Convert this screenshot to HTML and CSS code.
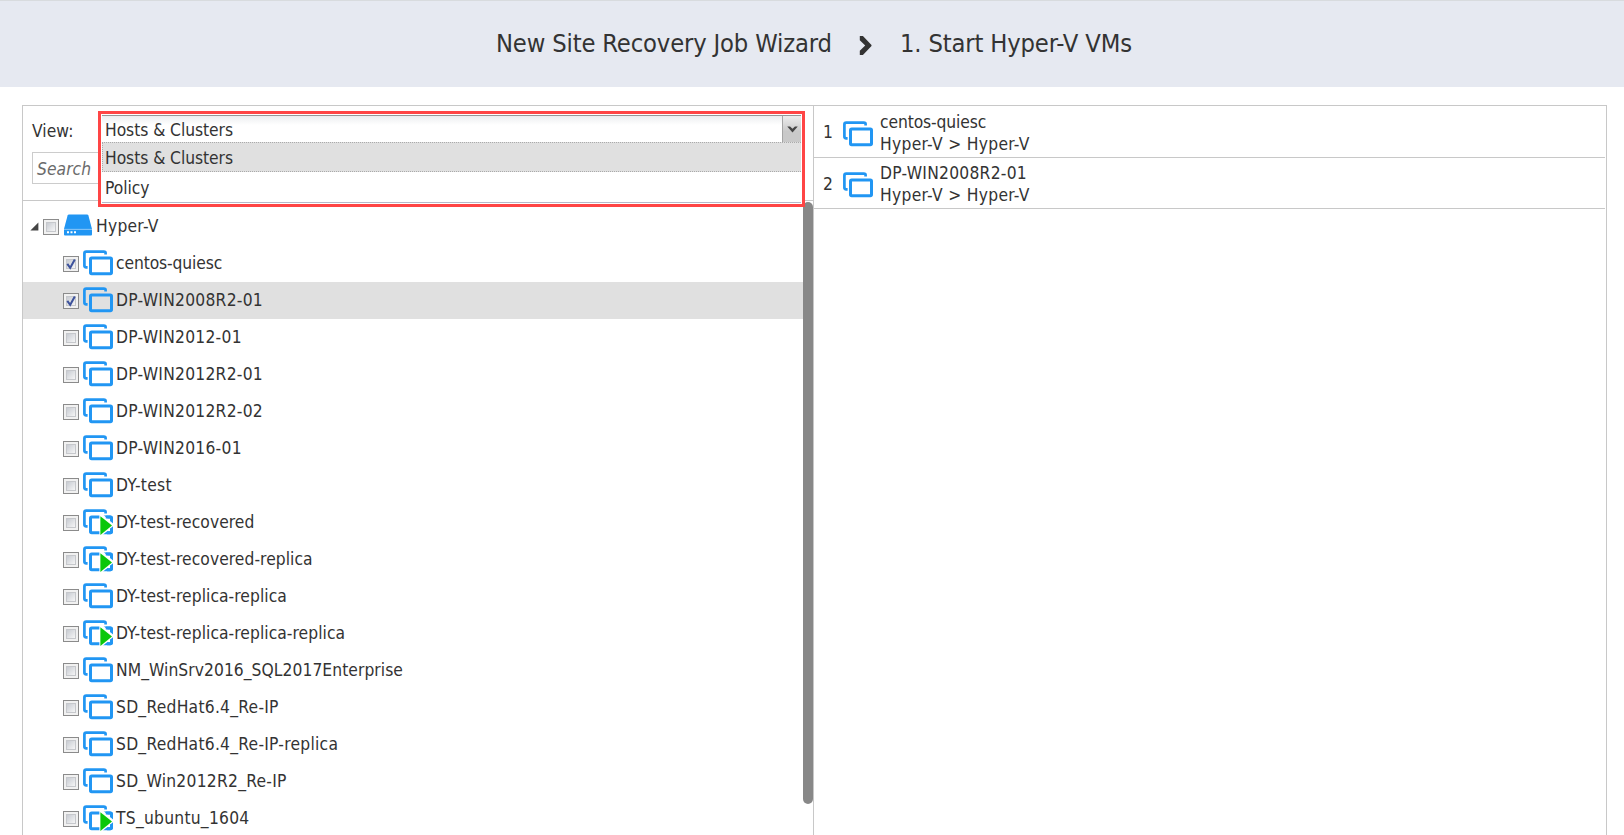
FILE: index.html
```html
<!DOCTYPE html>
<html lang="en">
<head>
<meta charset="utf-8">
<title>New Site Recovery Job Wizard</title>
<link rel="stylesheet" href="styles.css">
</head>
<body>
<svg class="defs" width="0" height="0">
  <defs>
    <symbol id="vm" viewBox="0 0 30 26">
      <path d="M4.6 17.4H3.2Q1.4 17.4 1.4 15.6V3.4Q1.4 1.6 3.2 1.6H20.8Q22.6 1.6 22.6 3V4.4" fill="none" stroke="#2196f3" stroke-width="2.7"/>
      <rect x="7.5" y="8" width="21" height="15.7" rx="1.2" fill="none" stroke="#2196f3" stroke-width="3"/>
    </symbol>
    <symbol id="vm-run" viewBox="0 0 30 26">
      <use href="#vm" width="30" height="26"/>
      <path d="M16.4 5.5V26H19.5L30 17.2V14.5L20 5.5Z" fill="#fff"/>
      <path d="M22.8 8H27Q28.5 8 28.5 9.5V12.2M28.5 19.4V22.2Q28.5 23.7 27 23.7H24" fill="none" stroke="#2196f3" stroke-width="3"/>
      <path d="M17.4 7.2V26L29 16.6Z" fill="#0bc70b"/>
    </symbol>
    <symbol id="server" viewBox="0 0 28 22">
      <path d="M5 .5H23Q24 .5 24.4 1.5L28 15H0L3.6 1.5Q4 .5 5 .5Z" fill="#2196f3"/>
      <path d="M0 15.4H28V20.6Q28 21.5 27 21.5H1Q0 21.5 0 20.6Z" fill="#2196f3"/>
      <path d="M0 15.2H28" stroke="#6bb8f7" stroke-width=".7"/>
      <path d="M3 17.2H5V19.2H3ZM6.5 17.2H8.5V19.2H6.5ZM10 17.2H12V19.2H10Z" fill="#fff"/>
    </symbol>
    <linearGradient id="box-fill" x1="0" y1="0" x2="1" y2="1">
      <stop offset="0" stop-color="#c5c9d0"/><stop offset="1" stop-color="#f8f8f8"/>
    </linearGradient>
    <symbol id="box" viewBox="0 0 16 16">
      <rect x=".5" y=".5" width="15" height="15" fill="#f1f1f1" stroke="#8b8b8b"/>
      <rect x="3.5" y="3.5" width="9" height="9" fill="url(#box-fill)" stroke="#c6c8cc"/>
    </symbol>
    <symbol id="box-on" viewBox="0 0 16 16">
      <use href="#box" width="16" height="16"/>
      <path d="M4.3 7.8L7.2 11.8L11.8 3.6" fill="none" stroke="#3d529c" stroke-width="2"/>
    </symbol>
  </defs>
</svg>

<header class="header">
  <span class="title">New Site Recovery Job Wizard</span>
  <svg class="crumb" viewBox="0 0 13 20"><path d="M.5 0H3.8L12.8 9.5V10.5L3.8 20H.5V15.6L6.2 10L.5 4.4Z" fill="#333"/></svg>
  <span class="step">1. Start Hyper-V VMs</span>
</header>

<main class="panel">
  <section class="left">
    <div class="filters">
      <span class="label">View:</span>
      <div class="search">Search</div>
      <div class="dropdown">
        <div class="field"><span class="value">Hosts &amp; Clusters</span>
          <span class="trigger"><svg viewBox="0 0 12 8"><path d="M0 .5L3.2 .5L6 3L8.8 .5L12 .5L6 7.5Z" fill="#444"/></svg></span>
        </div>
        <div class="option active">Hosts &amp; Clusters</div>
        <div class="option">Policy</div>
      </div>
    </div>
    <div class="tree-area">
      <div class="tree">
        <div class="row root"><svg class="arrow" viewBox="0 0 9 9"><path d="M8.4 .4V8.4H.4Z" fill="#444"/></svg><svg class="check"><use href="#box"/></svg><svg class="server"><use href="#server"/></svg><span class="wide">Hyper-V</span></div>
        <div class="row"><svg class="check"><use href="#box-on"/></svg><svg class="vm"><use href="#vm"/></svg><span class="tight">centos-quiesc</span></div>
        <div class="row selected"><svg class="check"><use href="#box-on"/></svg><svg class="vm"><use href="#vm"/></svg><span class="wide">DP-WIN2008R2-01</span></div>
        <div class="row"><svg class="check"><use href="#box"/></svg><svg class="vm"><use href="#vm"/></svg><span class="wide">DP-WIN2012-01</span></div>
        <div class="row"><svg class="check"><use href="#box"/></svg><svg class="vm"><use href="#vm"/></svg><span class="wide">DP-WIN2012R2-01</span></div>
        <div class="row"><svg class="check"><use href="#box"/></svg><svg class="vm"><use href="#vm"/></svg><span class="wide">DP-WIN2012R2-02</span></div>
        <div class="row"><svg class="check"><use href="#box"/></svg><svg class="vm"><use href="#vm"/></svg><span class="wide">DP-WIN2016-01</span></div>
        <div class="row"><svg class="check"><use href="#box"/></svg><svg class="vm"><use href="#vm"/></svg><span class="wide">DY-test</span></div>
        <div class="row"><svg class="check"><use href="#box"/></svg><svg class="vm"><use href="#vm-run"/></svg><span>DY-test-recovered</span></div>
        <div class="row"><svg class="check"><use href="#box"/></svg><svg class="vm"><use href="#vm-run"/></svg><span>DY-test-recovered-replica</span></div>
        <div class="row"><svg class="check"><use href="#box"/></svg><svg class="vm"><use href="#vm"/></svg><span>DY-test-replica-replica</span></div>
        <div class="row"><svg class="check"><use href="#box"/></svg><svg class="vm"><use href="#vm-run"/></svg><span>DY-test-replica-replica-replica</span></div>
        <div class="row"><svg class="check"><use href="#box"/></svg><svg class="vm"><use href="#vm"/></svg><span>NM_WinSrv2016_SQL2017Enterprise</span></div>
        <div class="row"><svg class="check"><use href="#box"/></svg><svg class="vm"><use href="#vm"/></svg><span class="wide">SD_RedHat6.4_Re-IP</span></div>
        <div class="row"><svg class="check"><use href="#box"/></svg><svg class="vm"><use href="#vm"/></svg><span class="wide">SD_RedHat6.4_Re-IP-replica</span></div>
        <div class="row"><svg class="check"><use href="#box"/></svg><svg class="vm"><use href="#vm"/></svg><span class="wide">SD_Win2012R2_Re-IP</span></div>
        <div class="row"><svg class="check"><use href="#box"/></svg><svg class="vm"><use href="#vm-run"/></svg><span class="wide">TS_ubuntu_1604</span></div>
      </div>
      <div class="scroll"></div>
    </div>
  </section>
  <section class="right">
    <div class="job"><span class="num">1</span><svg class="vm"><use href="#vm"/></svg><div class="lines"><span class="tight">centos-quiesc</span><span class="route">Hyper-V &gt; Hyper-V</span></div></div>
    <div class="job second"><span class="num">2</span><svg class="vm"><use href="#vm"/></svg><div class="lines"><span class="wide">DP-WIN2008R2-01</span><span class="route">Hyper-V &gt; Hyper-V</span></div></div>
  </section>
</main>
</body>
</html>
```
FILE: styles.css
```css
* { box-sizing: border-box; }
body {
  margin: 0;
  height: 835px;
  overflow: hidden;
  display: flex;
  flex-direction: column;
  background: #fff;
  color: #333;
  font: 17.3px/22px "DejaVu Sans Condensed", "DejaVu Sans", sans-serif;
  letter-spacing: 0.06px;
  white-space: nowrap;
}
svg { display: block; flex: none; }
.defs { position: absolute; }
.wide { letter-spacing: 0.26px; }
.tight { letter-spacing: -0.1px; }

.header {
  height: 87px;
  flex: none;
  display: flex;
  align-items: center;
  padding-left: 496px;
  background: #e6e9f1;
  border-top: 1px solid #d8dbde;
  font-size: 25.3px;
  line-height: 30px;
  letter-spacing: -0.16px;
}
.title { width: 363px; }
.crumb { width: 13px; height: 19px; margin: 3px 28px 0 0; }

.panel {
  flex: none;
  height: 740px;
  margin: 18px 17px 0 22px;
  border: 1px solid #c8c8c8;
  display: flex;
}
.left { width: 791px; border-right: 1px solid #c8c8c8; display: flex; flex-direction: column; }
.filters {
  position: relative;
  height: 95px;
  flex: none;
  padding: 14px 9px 0;
  border-bottom: 1px solid #c8c8c8;
}
.label { display: block; height: 32px; }
.search {
  width: 760px;
  height: 32px;
  padding: 5px 4px;
  border: 1px solid #ccc;
  color: #6b6b6b;
  font-style: italic;
}
.dropdown {
  position: absolute;
  left: 75px;
  top: 5px;
  z-index: 2;
  width: 707px;
  height: 96px;
  padding: 1px;
  border: 3px solid #ff4545;
  background: #fff;
  letter-spacing: -0.05px;
}
.field {
  height: 27px;
  border-top: 1px solid #969696;
  display: flex;
  background: linear-gradient(#eceef0, #fff 9px);
}
.value { flex: 1; padding: 3px 3px 0; }
.trigger {
  width: 19px;
  border-left: 1px solid #a5a5a5;
  background: linear-gradient(#ededed, #c9c9c9 60%);
  display: flex;
  justify-content: center;
  padding-top: 10px;
}
.trigger svg { width: 11px; height: 7px; }
.option { height: 30px; padding: 5px 3px; }
.active { padding: 4px 2px 0; background: #e0e0e0; border: 1px dotted #aaa; border-right: 0; }
.option:last-child { height: 31px; border-bottom: 1px solid #b5b8c8; }

.tree-area { flex: 1; min-height: 0; display: flex; }
.tree { width: 780px; padding-top: 7px; }
.row { height: 37px; display: flex; align-items: center; padding-left: 40px; }
.row span { padding-bottom: 2px; }
.selected { background: #e0e0e0; }
.check { width: 16px; height: 16px; margin: 1px 4px 0 0; }
.vm { width: 30px; height: 26px; }
.row .vm { margin: -2px 3px 0 0; }
.root { padding-left: 7px; }
.arrow { width: 9px; height: 9px; margin-right: 4px; }
.server { width: 28px; height: 22px; margin: -3px 4px 0 1px; }
.scroll { width: 10px; height: 602px; margin-top: 1px; border-radius: 5px; background: #888; }

.right { flex: 1; padding-right: 1px; }
.job {
  height: 52px;
  border-bottom: 1px solid #c8c8c8;
  display: flex;
  align-items: center;
  padding-left: 9px;
}
.job.second { height: 51px; }
.num { width: 20px; }
.second .num { padding-top: 2px; }
.job .vm { margin-top: 4px; }
.lines { display: grid; margin-left: 7px; padding-top: 2px; line-height: 22px; }
.route { letter-spacing: 0.3px; }
```
